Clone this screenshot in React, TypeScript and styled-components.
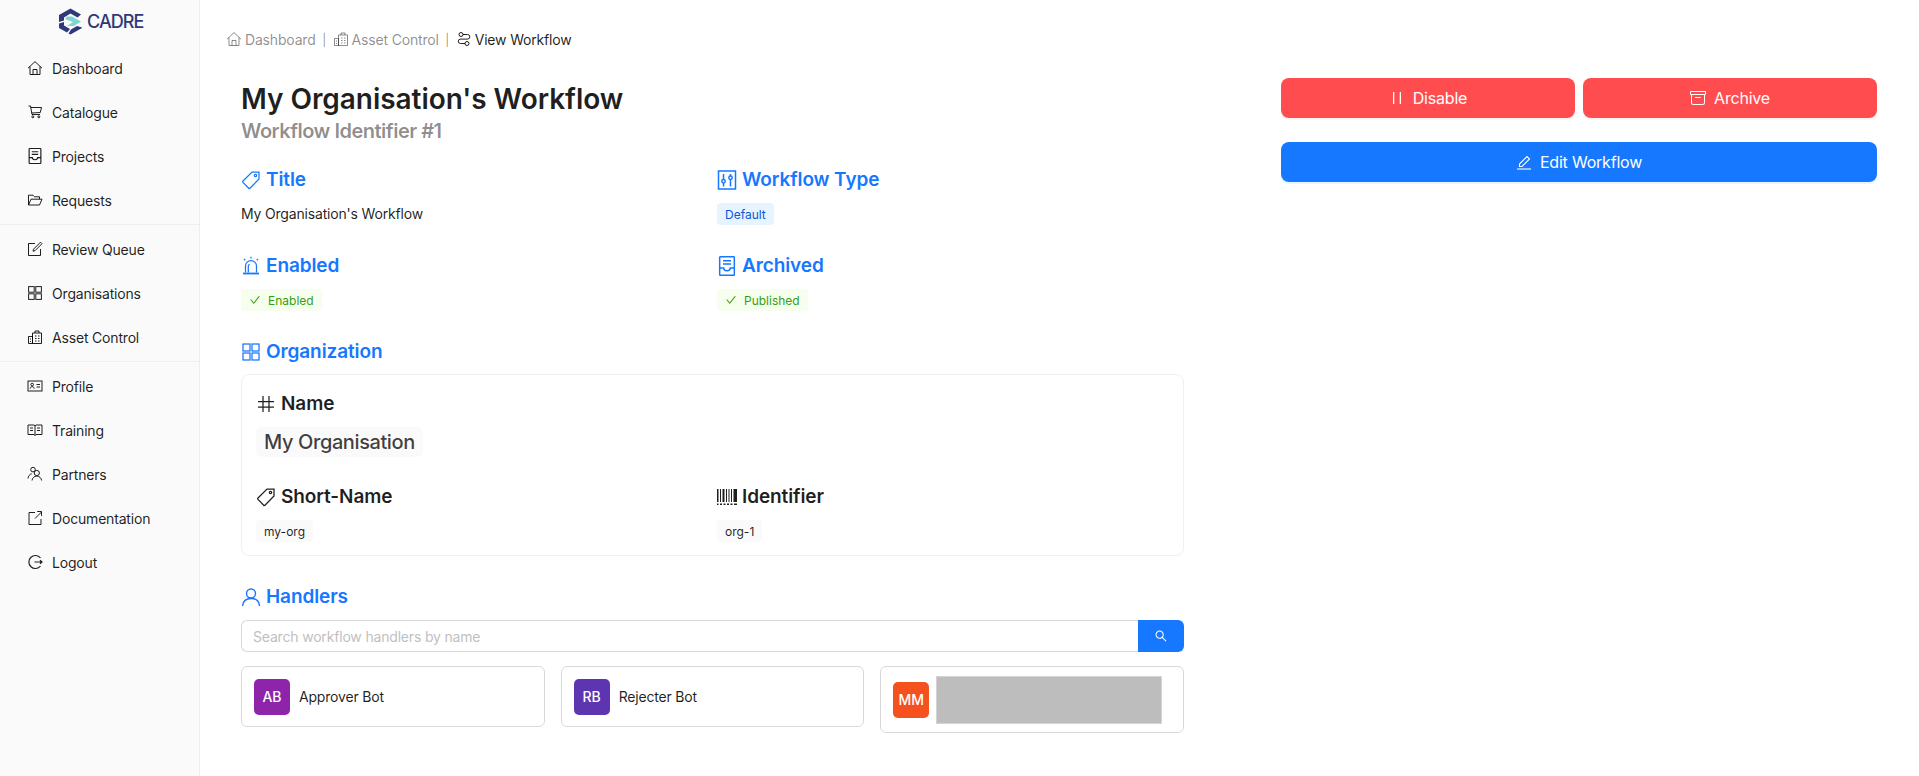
import React from 'react';
import styled, { createGlobalStyle } from 'styled-components';
import { BsArchive } from 'react-icons/bs';
import { AiOutlineSearch, AiOutlineCheck } from 'react-icons/ai';

const GlobalStyle = createGlobalStyle`
  html, body {
    margin: 0;
    padding: 0;
    background: #fff;
    font-family: Inter, "Liberation Sans", sans-serif;
    font-size: 14px;
    letter-spacing: -0.18px;
    color: rgba(0, 0, 0, 0.88);
  }
  * { box-sizing: border-box; }
`;

const Page = styled.div`
  display: flex;
  height: 776px;
  overflow: hidden;
`;

const Sidebar = styled.aside`
  width: 200px;
  flex: none;
  background: #fafafa;
  border-right: 1px solid #eeeeee;
`;

const LogoBar = styled.div`
  height: 48px;
  padding: 8px 0 0 58px;
  display: flex;
  align-items: flex-start;
  gap: 4px;
`;

const LogoText = styled.span`
  font-size: 18px;
  line-height: 28px;
  letter-spacing: -0.9px;
  font-weight: 500;
  color: #2f3878;
`;

const MenuItem = styled.div`
  height: 40px;
  margin-bottom: 4px;
  padding-left: 27px;
  display: flex;
  align-items: center;
  gap: 9px;
  font-size: 14px;
  color: rgba(0, 0, 0, 0.88);

  svg {
    width: 16px;
    height: 16px;
    flex: none;
  }
`;

const Divider = styled.div`
  height: 1px;
  background: #eeeeee;
  margin-bottom: 4px;
`;

const Main = styled.main`
  flex: 1;
  padding: 28px 42px 0 26px;
`;

const Breadcrumb = styled.nav`
  display: flex;
  align-items: center;
  height: 22px;
  margin-bottom: 29px;
`;

const Crumb = styled.span<{ $current?: boolean }>`
  display: inline-flex;
  align-items: center;
  gap: 3px;
  color: ${(p) => (p.$current ? 'rgba(0, 0, 0, 0.88)' : 'rgba(0, 0, 0, 0.45)')};

  svg {
    width: 16px;
    height: 16px;
  }
`;

const CrumbSep = styled.span`
  width: 17px;
  text-align: center;
  font-size: 12px;
  color: rgba(0, 0, 0, 0.45);
`;

const Body = styled.div`
  display: flex;
  padding-left: 15px;
  gap: 97px;
`;

const LeftCol = styled.section`
  width: 943px;
  flex: none;
`;

const RightCol = styled.section`
  width: 596px;
  flex: none;
  margin-top: -1px;
`;

const Title = styled.h2`
  margin: 0;
  font-size: 28px;
  line-height: 40px;
  letter-spacing: -0.05px;
  font-weight: 600;
`;

const Subtitle = styled.div`
  margin-top: -2px;
  font-size: 20px;
  line-height: 28px;
  letter-spacing: -0.5px;
  font-weight: 600;
  color: rgba(0, 0, 0, 0.45);
  margin-bottom: 21px;
`;

const FieldGrid = styled.div`
  display: grid;
  grid-template-columns: 476px 1fr;
  row-gap: 27px;
  margin-bottom: 27px;
`;

const Field = styled.div`
  display: flex;
  flex-direction: column;
  align-items: flex-start;
  gap: 9px;
`;

const Heading = styled.h4`
  margin: 0;
  display: flex;
  align-items: center;
  gap: 5px;
  font-size: 19px;
  line-height: 28px;
  letter-spacing: -0.1px;
  font-weight: 600;
  color: #1677ff;

  svg {
    width: 20px;
    height: 20px;
    flex: none;
  }
`;

const FieldText = styled.div`
  line-height: 22px;
`;

const Tag = styled.span<{ $tone?: 'blue' | 'green' | 'grey' }>`
  display: inline-flex;
  align-items: center;
  gap: 7px;
  height: 22px;
  padding: 0 8px;
  border-radius: 4px;
  font-size: 12px;
  letter-spacing: 0;
  background: ${(p) => (p.$tone === 'blue' ? '#e6f4ff' : p.$tone === 'green' ? '#f6ffed' : '#fafafa')};
  color: ${(p) => (p.$tone === 'blue' ? '#0958d9' : p.$tone === 'green' ? '#389e0d' : 'rgba(0, 0, 0, 0.88)')};

  svg {
    width: 12px;
    height: 12px;
  }
`;

const OrgCard = styled.div`
  margin-top: 8px;
  border: 1px solid #f0f0f0;
  border-radius: 8px;
  padding: 16px 14px 13px;
  display: grid;
  grid-template-columns: 461px 1fr;
  row-gap: 27px;
`;

const OrgField = styled.div<{ $wide?: boolean }>`
  grid-column: ${(p) => (p.$wide ? '1 / -1' : 'auto')};
  display: flex;
  flex-direction: column;
  align-items: flex-start;
  gap: 10px;
`;

const SubHeading = styled.h5`
  margin: 0;
  display: flex;
  align-items: center;
  gap: 5px;
  font-size: 19px;
  line-height: 26px;
  letter-spacing: -0.1px;
  font-weight: 600;

  svg {
    width: 20px;
    height: 20px;
    flex: none;
  }
`;

const NameTag = styled.span`
  height: 30px;
  padding: 0 8px;
  border-radius: 6px;
  background: #fafafa;
  font-size: 20px;
  line-height: 30px;
  letter-spacing: -0.4px;
  font-weight: 500;
  color: rgba(0, 0, 0, 0.75);
`;

const HandlersSection = styled.div`
  margin-top: 27px;
`;

const SearchRow = styled.div`
  display: flex;
  height: 32px;
  margin-top: 9px;
  margin-bottom: 14px;
`;

const SearchInput = styled.input`
  flex: 1;
  min-width: 0;
  height: 32px;
  padding: 0 11px;
  border: 1px solid #d9d9d9;
  border-right: 0;
  border-radius: 6px 0 0 6px;
  outline: none;
  font: inherit;
  letter-spacing: inherit;

  &::placeholder {
    color: #bfbfbf;
  }
`;

const SearchButton = styled.button`
  width: 46px;
  border: 0;
  border-radius: 0 6px 6px 0;
  background: #1677ff;
  color: #fff;
  display: flex;
  align-items: center;
  justify-content: center;
  padding: 0;
`;

const HandlerGrid = styled.div`
  display: grid;
  grid-template-columns: repeat(3, 1fr);
  gap: 16px;
  align-items: start;
`;

const HandlerCard = styled.div<{ $tight?: boolean }>`
  display: flex;
  align-items: center;
  gap: ${(p) => (p.$tight ? '7px' : '9px')};
  padding: ${(p) => (p.$tight ? '8px 12px' : '12px')};
  border: 1px solid #d9d9d9;
  border-radius: 6px;
  height: ${(p) => (p.$tight ? '67px' : '61px')};
`;

const Avatar = styled.div<{ $bg: string }>`
  width: 36px;
  height: 36px;
  flex: none;
  border-radius: 5px;
  background: ${(p) => p.$bg};
  color: #fff;
  font-weight: 500;
  letter-spacing: 0;
  display: flex;
  align-items: center;
  justify-content: center;
`;

const Redacted = styled.div`
  width: 226px;
  height: 48px;
  background: #bdbdbd;
  border: 1px solid #d4d4d4;
`;

const ButtonRow = styled.div`
  display: flex;
  gap: 8px;
  margin-bottom: 24px;
`;

const ActionButton = styled.button<{ $danger?: boolean }>`
  flex: 1;
  width: 100%;
  height: 40px;
  border: 0;
  border-radius: 8px;
  font: inherit;
  font-size: 16px;
  letter-spacing: -0.2px;
  color: #fff;
  background: ${(p) => (p.$danger ? '#ff4d4f' : '#1677ff')};
  box-shadow: 0 2px 0 ${(p) => (p.$danger ? 'rgba(255, 38, 5, 0.06)' : 'rgba(5, 145, 255, 0.1)')};
  display: flex;
  align-items: center;
  justify-content: center;
  gap: 8px;

  svg {
    width: 16px;
    height: 16px;
  }
`;

const Logo = () => (
  <svg width="25" height="27" viewBox="0 0 25 27">
    <path d="M12.5.5 23 6.5l-3.500 3-7-4L6 9.500v3L1 14V7z" fill="#2f3878" />
    <path d="M1 15.500 6 14v3.500L12 21l-3 3.500L1 20z" fill="#2f3878" />
    <path d="M13 21.500 19 18l5 1.500v.5l-11.500 6.500-2-1z" fill="#2f3878" />
    <path d="M9 8.500h5l9 5-7 4.500H9l6-4-8-3z" fill="#7fd6cf" />
  </svg>
);

const Line: React.FC<{ box?: number; weight?: number; children: React.ReactNode }> = ({ box = 16, weight = 1, children }) => (
  <svg viewBox={`0 0 ${box} ${box}`} fill="none" stroke="currentColor" strokeWidth={weight}>
    {children}
  </svg>
);

const HomeIcon = () => (
  <Line>
    <path d="M1 8.200 8 1.600l7 6.600" />
    <path d="M3 6.500v8h10v-8" />
    <path d="M6 14.500V9.500h4v5" />
  </Line>
);

const CartIcon = () => (
  <Line>
    <path d="M1.500 2h2l1.500 8.500h8" />
    <path d="M3.800 3.500h10.700l-1.200 5L4.700 9" />
    <circle cx="5.800" cy="12.800" r="1" />
    <circle cx="11.800" cy="12.800" r="1" />
  </Line>
);

const ReportIcon = () => (
  <svg viewBox="1 0.5 14 15" fill="none" stroke="currentColor" strokeWidth="1.1">
    <rect x="2.500" y="1" width="11" height="14" rx="0.6" />
    <path d="M5 4h6M5 6.500h6" />
    <path d="M2.500 9.500H5.500c0 1.400 1 2 2.500 2s2.500-.6 2.500-2h3" />
  </svg>
);

const FolderIcon = () => (
  <Line>
    <path d="M1.500 13V3.200h4.500l1.500 1.600h5v2.400" />
    <path d="M1.500 13h11L15 7.200H4z" />
  </Line>
);

const ReviewIcon = () => (
  <Line>
    <path d="M8 2.500H1.500v12h12V8" />
    <path d="M13.500 1.200 15 2.700 8 9.700l-2 .5.5-2z" />
  </Line>
);

const GridIcon = () => (
  <Line box={20} weight={1.25}>
    <rect x="2" y="2" width="7" height="7" />
    <rect x="11" y="2" width="7" height="7" />
    <rect x="2" y="11" width="7" height="7" />
    <rect x="11" y="11" width="7" height="7" />
  </Line>
);

const AssetIcon = () => (
  <Line>
    <path d="M1.500 7.500h4v7h-4z" />
    <path d="M5.500 4h9v10.500h-9z" />
    <path d="M8 4V2h4v2" />
    <path d="M8 7h1.500M11 7h1.500M8 9.500h1.500M11 9.500h1.500M8 12h1.500M11 12h1.500M3 10h1M3 12.500h1" />
  </Line>
);

const ProfileIcon = () => (
  <Line>
    <rect x="1" y="3" width="14" height="10" />
    <circle cx="5.200" cy="6.600" r="1.300" />
    <path d="M3.200 10.600c.3-1.400 1-2 2-2s1.700.6 2 2" />
    <path d="M9.500 6.500H13M9.500 9H13" />
  </Line>
);

const BookIcon = () => (
  <Line>
    <path d="M1 3h6l1 .8L9 3h6v9.500H9l-1 1-1-1H1z" />
    <path d="M8 3.800v9.700" />
    <path d="M3 6h3M3 8.500h3M10 6h3M10 8.500h3" />
  </Line>
);

const PartnersIcon = () => (
  <Line>
    <circle cx="6" cy="3.600" r="2.300" />
    <path d="M1 12.500c.3-2.500 1.600-4.200 3.800-4.800" />
    <circle cx="9.800" cy="7" r="2.600" />
    <path d="M5 14.500c.3-2.500 2.200-4.400 4.800-4.400s4.500 1.900 4.800 4.400" />
  </Line>
);

const DocsIcon = () => (
  <Line>
    <path d="M8 2.500H2v12h12V9" />
    <path d="M8 8.500 14.500 2M10.200 1.500h4.300v4.300" />
  </Line>
);

const LogoutIcon = () => (
  <Line weight={1.2}>
    <path d="M13.500 4a6.500 6.500 0 1 0 0 8" />
    <path d="M7.500 8H15M13 6.200 15 8l-2 1.800" />
  </Line>
);

const RouteIcon = () => (
  <Line>
    <circle cx="5" cy="3.500" r="2" />
    <circle cx="11" cy="12.500" r="2" />
    <path d="M7 3.500h4.500a2.300 2.300 0 0 1 0 4.600h-7a2.200 2.200 0 0 0 0 4.400H9" />
  </Line>
);

const SirenIcon = () => (
  <Line box={20} weight={1.25}>
    <path d="M4.500 16.500V10a5.500 5.500 0 0 1 11 0v6.500" />
    <path d="M7.300 16.500v-6c0-1 .5-1.800 1.300-2.200" />
    <path d="M2 17.500h16" strokeWidth="1.800" />
    <path d="M10 .8v1.700M3 3l1.300 1.300M17 3l-1.300 1.300" />
  </Line>
);

const SlidersIcon = () => (
  <Line box={20} weight={1.5}>
    <rect x="1.500" y="1" width="17" height="18" />
    <path d="M6.500 4v5.500M6.500 13v3.500M13.500 4v2M13.500 9.500v7" />
    <circle cx="6.500" cy="11.200" r="1.700" />
    <circle cx="13.500" cy="7.800" r="1.700" />
  </Line>
);

const TagIcon = () => (
  <Line box={20} weight={1.25}>
    <path d="M11 2h7v7l-9 9.200q-.7.6-1.300 0L2 12.400q-.7-.7 0-1.400z" />
    <circle cx="14.500" cy="5.500" r="1.200" />
  </Line>
);

const HashIcon = () => (
  <Line box={20} weight={1.25}>
    <path d="M2 7.500h16M2 13h16M7 2v16M13 2v16" />
  </Line>
);

const BarcodeIcon = () => (
  <svg viewBox="0 0 20 18" fill="currentColor">
    <path d="M0 1h1.500v13H0zM3 1h1v13H3zM5.500 1h2v13h-2zM9 1h1v13H9zM11.500 1h1v13h-1zM14 1h1v13h-1zM16.500 1H20v13h-3.500z" />
    <path d="M0 15.500h1.500V17H0zM3 15.500h2V17H3zM6.500 15.500h2V17h-2zM10 15.500h2V17h-2zM13.500 15.500h2V17h-2zM17 15.500h3V17h-3z" />
  </svg>
);

const UserIcon = () => (
  <Line box={20} weight={1.4}>
    <circle cx="10" cy="6.500" r="4.500" />
    <path d="M1.500 19c.5-4.500 3.500-7.500 8.500-7.500s8 3 8.500 7.500" />
  </Line>
);

const PauseIcon = () => (
  <svg viewBox="0 0 16 16" fill="currentColor">
    <rect x="4" y="2" width="1.300" height="12" />
    <rect x="10.700" y="2" width="1.300" height="12" />
  </svg>
);

const EditIcon = () => (
  <Line weight={1.1}>
    <path d="M1 15h14" />
    <path d="M3.500 12.500V10L11 2.500 13.500 5 6 12.500z" />
  </Line>
);

const menuGroups = [
  [
    { label: 'Dashboard', icon: <HomeIcon /> },
    { label: 'Catalogue', icon: <CartIcon /> },
    { label: 'Projects', icon: <ReportIcon /> },
    { label: 'Requests', icon: <FolderIcon /> },
  ],
  [
    { label: 'Review Queue', icon: <ReviewIcon /> },
    { label: 'Organisations', icon: <GridIcon /> },
    { label: 'Asset Control', icon: <AssetIcon /> },
  ],
  [
    { label: 'Profile', icon: <ProfileIcon /> },
    { label: 'Training', icon: <BookIcon /> },
    { label: 'Partners', icon: <PartnersIcon /> },
    { label: 'Documentation', icon: <DocsIcon /> },
    { label: 'Logout', icon: <LogoutIcon /> },
  ],
];

const App: React.FC = () => {
  return (
    <Page>
      <GlobalStyle />
      <Sidebar>
        <LogoBar>
          <Logo />
          <LogoText>CADRE</LogoText>
        </LogoBar>
        {menuGroups.map((group, i) => (
          <React.Fragment key={i}>
            {i > 0 && <Divider />}
            {group.map((item) => (
              <MenuItem key={item.label}>
                {item.icon}
                {item.label}
              </MenuItem>
            ))}
          </React.Fragment>
        ))}
      </Sidebar>
      <Main>
        <Breadcrumb>
          <Crumb><HomeIcon />Dashboard</Crumb>
          <CrumbSep>|</CrumbSep>
          <Crumb><AssetIcon />Asset Control</Crumb>
          <CrumbSep>|</CrumbSep>
          <Crumb $current><RouteIcon />View Workflow</Crumb>
        </Breadcrumb>
        <Body>
          <LeftCol>
            <Title>My Organisation's Workflow</Title>
            <Subtitle>Workflow Identifier #1</Subtitle>
            <FieldGrid>
              <Field>
                <Heading><TagIcon />Title</Heading>
                <FieldText>My Organisation's Workflow</FieldText>
              </Field>
              <Field>
                <Heading><SlidersIcon />Workflow Type</Heading>
                <Tag $tone="blue">Default</Tag>
              </Field>
              <Field>
                <Heading><SirenIcon />Enabled</Heading>
                <Tag $tone="green"><AiOutlineCheck />Enabled</Tag>
              </Field>
              <Field>
                <Heading><ReportIcon />Archived</Heading>
                <Tag $tone="green"><AiOutlineCheck />Published</Tag>
              </Field>
            </FieldGrid>
            <Heading><GridIcon />Organization</Heading>
            <OrgCard>
              <OrgField $wide>
                <SubHeading><HashIcon />Name</SubHeading>
                <NameTag>My Organisation</NameTag>
              </OrgField>
              <OrgField>
                <SubHeading><TagIcon />Short-Name</SubHeading>
                <Tag>my-org</Tag>
              </OrgField>
              <OrgField>
                <SubHeading><BarcodeIcon />Identifier</SubHeading>
                <Tag>org-1</Tag>
              </OrgField>
            </OrgCard>
            <HandlersSection>
              <Heading><UserIcon />Handlers</Heading>
              <SearchRow>
                <SearchInput placeholder="Search workflow handlers by name" />
                <SearchButton><AiOutlineSearch size={14} /></SearchButton>
              </SearchRow>
              <HandlerGrid>
                <HandlerCard>
                  <Avatar $bg="#8e24aa">AB</Avatar>
                  Approver Bot
                </HandlerCard>
                <HandlerCard>
                  <Avatar $bg="#5e35b1">RB</Avatar>
                  Rejecter Bot
                </HandlerCard>
                <HandlerCard $tight>
                  <Avatar $bg="#f4511e">MM</Avatar>
                  <Redacted />
                </HandlerCard>
              </HandlerGrid>
            </HandlersSection>
          </LeftCol>
          <RightCol>
            <ButtonRow>
              <ActionButton $danger><PauseIcon />Disable</ActionButton>
              <ActionButton $danger><BsArchive />Archive</ActionButton>
            </ButtonRow>
            <ActionButton><EditIcon />Edit Workflow</ActionButton>
          </RightCol>
        </Body>
      </Main>
    </Page>
  );
};

export default App;
